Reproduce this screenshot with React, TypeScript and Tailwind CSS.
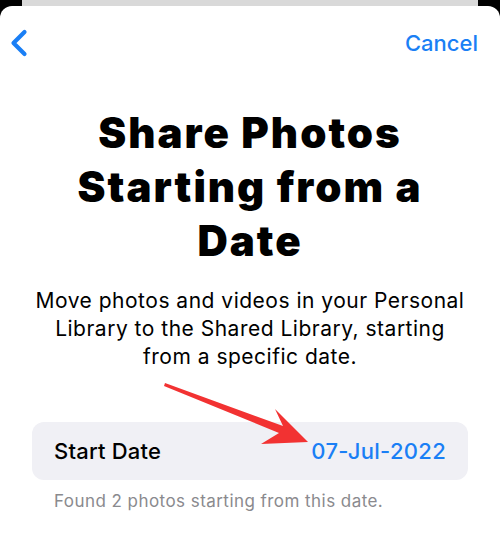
import type { ReactNode } from "react";

function Chevron() {
  return (
    <svg width="20" height="28" viewBox="0 0 20 28" aria-hidden="true">
      <path
        d="M15.5 3 L4.5 14 L15.5 25"
        fill="none"
        stroke="#1a7ff5"
        strokeWidth="4.2"
        strokeLinecap="round"
        strokeLinejoin="round"
      />
    </svg>
  );
}

function Row({ label, children }: { label: string; children: ReactNode }) {
  return (
    <div className="mx-[32px] flex h-[58px] items-center justify-between rounded-[12px] bg-[#f0f0f5] px-[22px]">
      <span className="text-[22px] font-medium tracking-[0.2px] text-black">{label}</span>
      <span className="text-[22px] font-medium tracking-[0.3px] text-[#1a7ff5]">{children}</span>
    </div>
  );
}

export default function App() {
  return (
    <div
      className="relative flex h-[546px] w-[500px] flex-col overflow-hidden bg-black"
      style={{ fontFamily: "Inter, 'Noto Sans', sans-serif" }}
    >
      <div className="mx-[22px] h-[6px] shrink-0 bg-[#d9d9d9]" />
      <div className="flex-1 rounded-t-[12px] bg-white">
        <header className="flex h-[74px] items-center justify-between pl-[9px] pr-[22px]">
          <button type="button" aria-label="Back">
            <Chevron />
          </button>
          <button type="button" className="text-[22px] font-medium text-[#1a7ff5]">
            Cancel
          </button>
        </header>

        <h1 className="mt-[26px] text-center text-[42px] font-black leading-[54px] tracking-[2px] text-black">
          Share Photos
          <br />
          Starting from a
          <br />
          Date
        </h1>

        <p className="mt-[19px] text-center text-[21px] leading-[28px] tracking-[0.5px] text-black">
          Move photos and videos in your Personal
          <br />
          Library to the Shared Library, starting
          <br />
          from a specific date.
        </p>

        <div className="mt-[51px]">
          <Row label="Start Date">07-Jul-2022</Row>
        </div>

        <p className="mt-[10px] px-[54px] text-[17px] leading-[22px] tracking-[0.45px] text-[#8a8a8e]">
          Found 2 photos starting from this date.
        </p>
      </div>

      <svg className="pointer-events-none absolute inset-0" width="500" height="546" aria-hidden="true">
        <polygon
          points="165,383 283,426 275,409 308,442 261,444 279,433 164,386"
          fill="#f23232"
        />
      </svg>
    </div>
  );
}
